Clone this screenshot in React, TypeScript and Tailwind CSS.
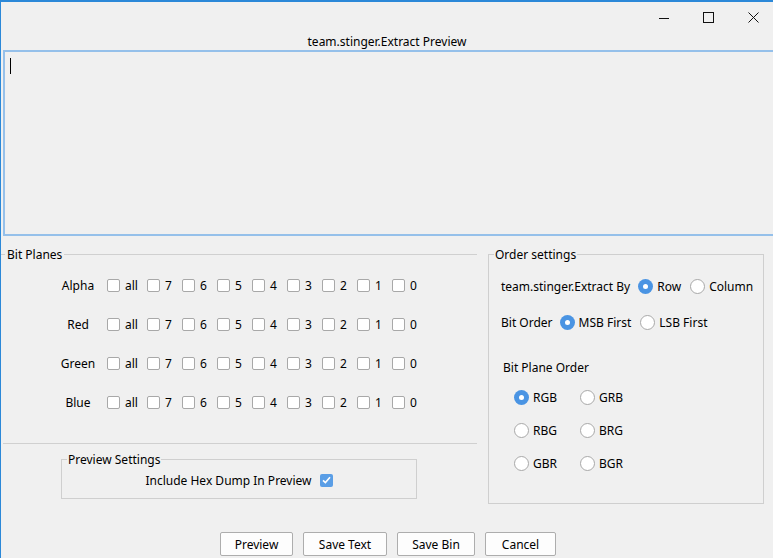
import React from "react";

const bits = ["all", "7", "6", "5", "4", "3", "2", "1", "0"];
const planes = ["Alpha", "Red", "Green", "Blue"];
const orders = [
  ["RGB", "GRB"],
  ["RBG", "BRG"],
  ["GBR", "BGR"],
];

function CheckBox({ checked = false }: { checked?: boolean }) {
  if (checked) {
    return (
      <span className="flex h-[13px] w-[13px] shrink-0 items-center justify-center rounded-[2px] bg-[#5a9ee6]">
        <svg width="9" height="8" viewBox="0 0 9 8">
          <path d="M1 4.3 L3.4 6.6 L8 1.2" stroke="white" strokeWidth="1.6" fill="none" />
        </svg>
      </span>
    );
  }
  return <span className="h-[13px] w-[13px] shrink-0 rounded-[2px] border border-[#a8a8a8] bg-white" />;
}

function Radio({ checked = false }: { checked?: boolean }) {
  if (checked) {
    return (
      <span className="flex h-[15px] w-[15px] shrink-0 items-center justify-center rounded-full bg-[#4a94e3]">
        <span className="h-[5px] w-[5px] rounded-full bg-white" />
      </span>
    );
  }
  return <span className="h-[15px] w-[15px] shrink-0 rounded-full border border-[#a8a8a8] bg-white" />;
}

function Button({ label, width }: { label: string; width: string }) {
  return (
    <button className={`flex h-[24px] items-center justify-center rounded-[2px] border border-[#adadad] bg-[#fdfdfd] ${width}`}>
      {label}
    </button>
  );
}

export default function App() {
  return (
    <div className="flex h-[558px] w-[773px] flex-col overflow-hidden border-l border-t-2 border-[#2b88d8] bg-[#f0f0f0] font-['Noto_Sans',sans-serif] text-[12px] leading-[17px] text-black">
      {/* caption buttons */}
      <div className="flex h-[31px] shrink-0 items-center justify-end gap-[34px] pr-[14px]">
        <svg width="10" height="10" viewBox="0 0 10 10">
          <path d="M0 5.5 H10" stroke="#111" strokeWidth="1" />
        </svg>
        <svg width="11" height="11" viewBox="0 0 11 11">
          <rect x="0.5" y="0.5" width="10" height="10" stroke="#111" strokeWidth="1" fill="none" />
        </svg>
        <svg width="11" height="11" viewBox="0 0 11 11">
          <path d="M0.5 0.5 L10.5 10.5 M10.5 0.5 L0.5 10.5" stroke="#111" strokeWidth="1" />
        </svg>
      </div>
      <div className="h-[17px] shrink-0 text-center">team.stinger.Extract Preview</div>

      {/* preview text area */}
      <div className="ml-[2px] h-[186px] w-[775px] shrink-0 border-2 border-[#95c0ea] pl-[5px] pt-[6px]">
        <span className="block h-[16px] w-px bg-black" />
      </div>

      <div className="flex items-start">
        {/* left column */}
        <div className="flex w-[476px] flex-col">
          <div className="mt-[10px] flex h-[17px] items-center">
            <span className="h-px w-[4px] bg-[#d0d0d0]" />
            <span className="ml-[2px]">Bit Planes</span>
            <span className="ml-[2px] h-px flex-1 bg-[#d0d0d0]" />
          </div>
          <div className="mt-[3px] ml-[57px] flex flex-col">
            {planes.map((p) => (
              <div key={p} className="flex h-[39px] items-center">
                <span className="w-[40px] text-center">{p}</span>
                <div className="ml-[9px] flex items-center">
                  {bits.map((b, i) => (
                    <label key={b} className={`flex items-center gap-[5px] ${i === 0 ? "w-[40px]" : "w-[35px]"}`}>
                      <CheckBox />
                      <span>{b}</span>
                    </label>
                  ))}
                </div>
              </div>
            ))}
          </div>
          <div className="mt-[21px] ml-[2px] h-px bg-[#d0d0d0]" />
          <fieldset className="mt-[7px] ml-[60px] w-[356px] border border-[#cfcfcf] px-[5px] pb-[6px]">
            <legend className="px-[1px]">Preview Settings</legend>
            <div className="flex h-[24px] items-center justify-center gap-[8px]">
              <span>Include Hex Dump In Preview</span>
              <CheckBox checked />
            </div>
          </fieldset>
        </div>

        {/* right column */}
        <fieldset className="mt-[10px] ml-[11px] h-[258px] w-[276px] border border-[#cfcfcf] px-[5px]">
          <legend className="px-[1px]">Order settings</legend>
          <div className="mt-[13px] ml-[7px] flex h-[20px] items-center">
            <span className="mr-[8px]">team.stinger.Extract By</span>
            <Radio checked />
            <span className="ml-[4px] mr-[9px]">Row</span>
            <Radio />
            <span className="ml-[4px]">Column</span>
          </div>
          <div className="mt-[16px] ml-[7px] flex h-[20px] items-center">
            <span className="mr-[7px]">Bit Order</span>
            <Radio checked />
            <span className="ml-[4px] mr-[9px]">MSB First</span>
            <Radio />
            <span className="ml-[4px]">LSB First</span>
          </div>
          <div className="mt-[25px] ml-[9px] flex h-[20px] items-center">Bit Plane Order</div>
          <div className="mt-[10px] ml-[20px] grid grid-cols-[66px_66px] gap-y-[13.3px]">
            {orders.flat().map((o, i) => (
              <div key={o} className="flex h-[20px] items-center gap-[4px]">
                <Radio checked={i === 0} />
                <span>{o}</span>
              </div>
            ))}
          </div>
        </fieldset>
      </div>

      <div className="mt-[28px] ml-[2px] flex justify-center gap-[10px]">
        <Button label="Preview" width="w-[73px]" />
        <Button label="Save Text" width="w-[84px]" />
        <Button label="Save Bin" width="w-[78px]" />
        <Button label="Cancel" width="w-[71px]" />
      </div>
    </div>
  );
}
